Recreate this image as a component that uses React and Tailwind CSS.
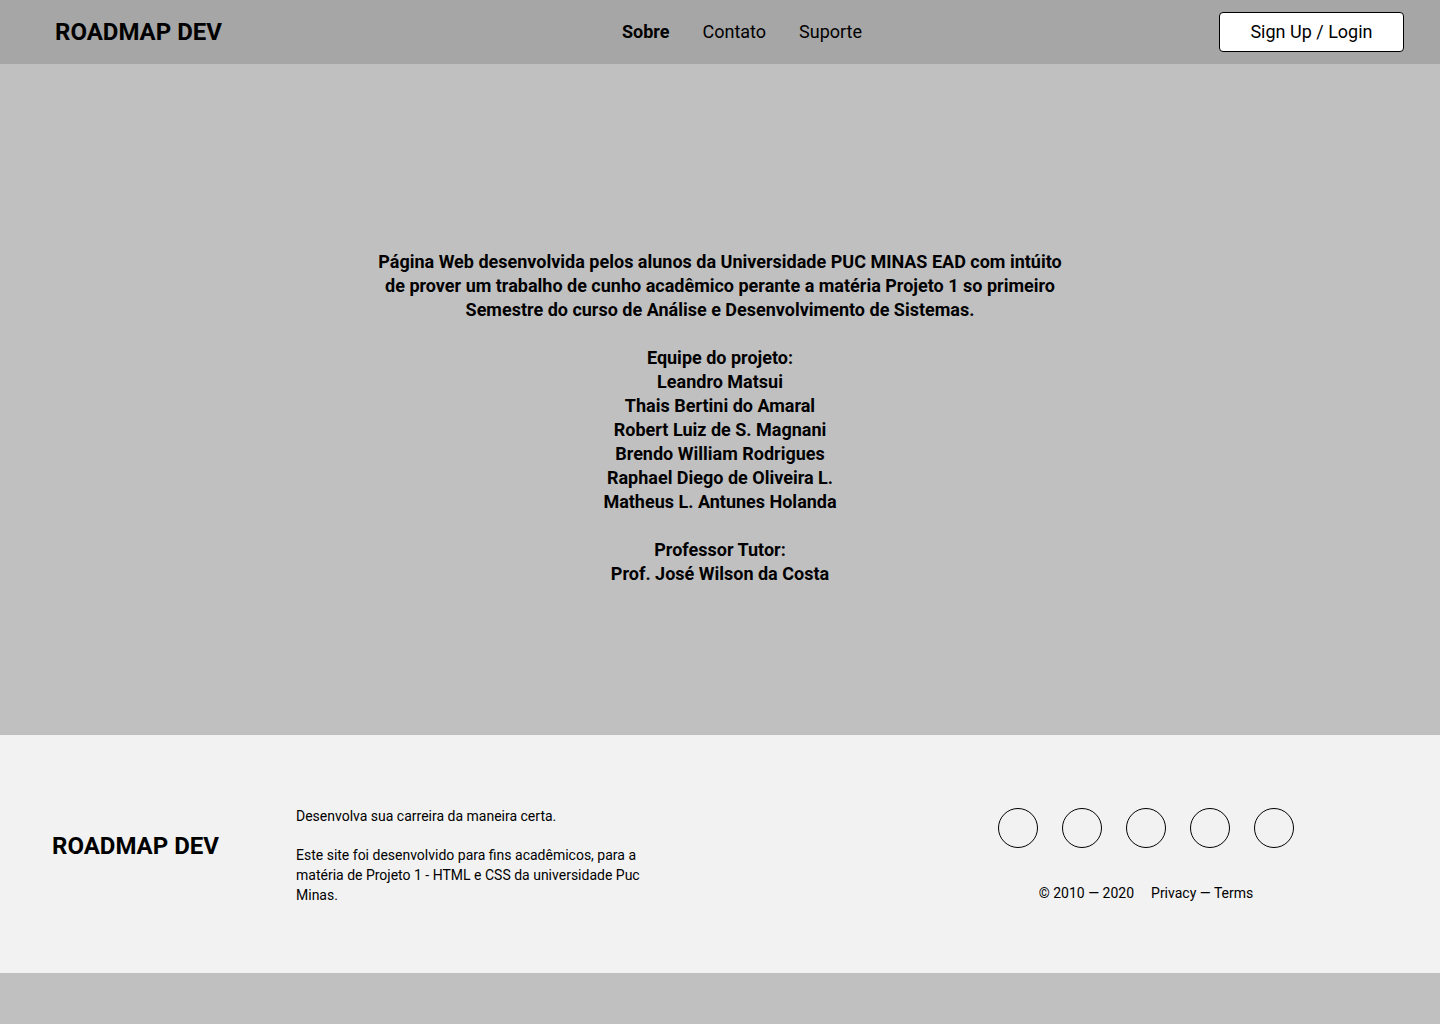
export default function App() {
    const team = [
        'Leandro Matsui',
        'Thais Bertini do Amaral',
        'Robert Luiz de S. Magnani',
        'Brendo William Rodrigues',
        'Raphael Diego de Oliveira L.',
        'Matheus L. Antunes Holanda',
    ]

    return (
        <div className="min-h-[1024px] bg-[#c0c0c0] text-black font-['Roboto',sans-serif]">
            {/* Header */}
            <header className="h-16 bg-[#a6a6a6] flex items-center justify-between pl-[55px] pr-[36px]">
                <h1 className="text-[24px] font-bold leading-none w-[300px]">ROADMAP DEV</h1>
                <nav className="flex items-center gap-[33px] text-[18px] ml-[25px] mb-[2px]">
                    <a className="font-bold">Sobre</a>
                    <a>Contato</a>
                    <a>Suporte</a>
                </nav>
                <div className="w-[300px] flex justify-end">
                    <button className="w-[185px] h-[40px] pb-[2px] bg-white border border-black rounded-[4px] text-[18px]">
                        Sign Up / Login
                    </button>
                </div>
            </header>

            {/* Main */}
            <main className="h-[671px] flex justify-center pt-[186px]">
                <div className="w-[700px] text-center font-bold text-[18px] leading-[24px]">
                    <p>
                        Página Web desenvolvida pelos alunos da Universidade PUC MINAS EAD com intúito
                        de prover um trabalho de cunho acadêmico perante a matéria Projeto 1 so primeiro
                        Semestre do curso de Análise e Desenvolvimento de Sistemas.
                    </p>
                    <p className="mt-[24px]">Equipe do projeto:</p>
                    {team.map((n) => (
                        <p key={n}>{n}</p>
                    ))}
                    <p className="mt-[24px]">Professor Tutor:</p>
                    <p>Prof. José Wilson da Costa</p>
                </div>
            </main>

            {/* Footer */}
            <footer className="h-[238px] bg-[#f2f2f2] flex items-start pl-[52px] pt-[71px]">
                <div className="w-[244px] pt-[25px]">
                    <h2 className="text-[24px] font-bold leading-[30px]">ROADMAP DEV</h2>
                </div>
                <div className="w-[360px] text-[14px] leading-[20px]">
                    <p>Desenvolva sua carreira da maneira certa.</p>
                    <p className="mt-[19px]">
                        Este site foi desenvolvido para fins acadêmicos, para a matéria de Projeto 1 - HTML e CSS da universidade Puc Minas.
                    </p>
                </div>
                <div className="ml-[342px] flex flex-col items-center pt-[2px]">
                    <div className="flex gap-[24px]">
                        {[0, 1, 2, 3, 4].map((i) => (
                            <div key={i} className="w-[40px] h-[40px] rounded-full border border-black" />
                        ))}
                    </div>
                    <div className="mt-[35px] text-[14px] leading-[20px] flex gap-[17px]">
                        <span>© 2010 — 2020</span>
                        <span>Privacy — Terms</span>
                    </div>
                </div>
            </footer>
        </div>
    )
}
